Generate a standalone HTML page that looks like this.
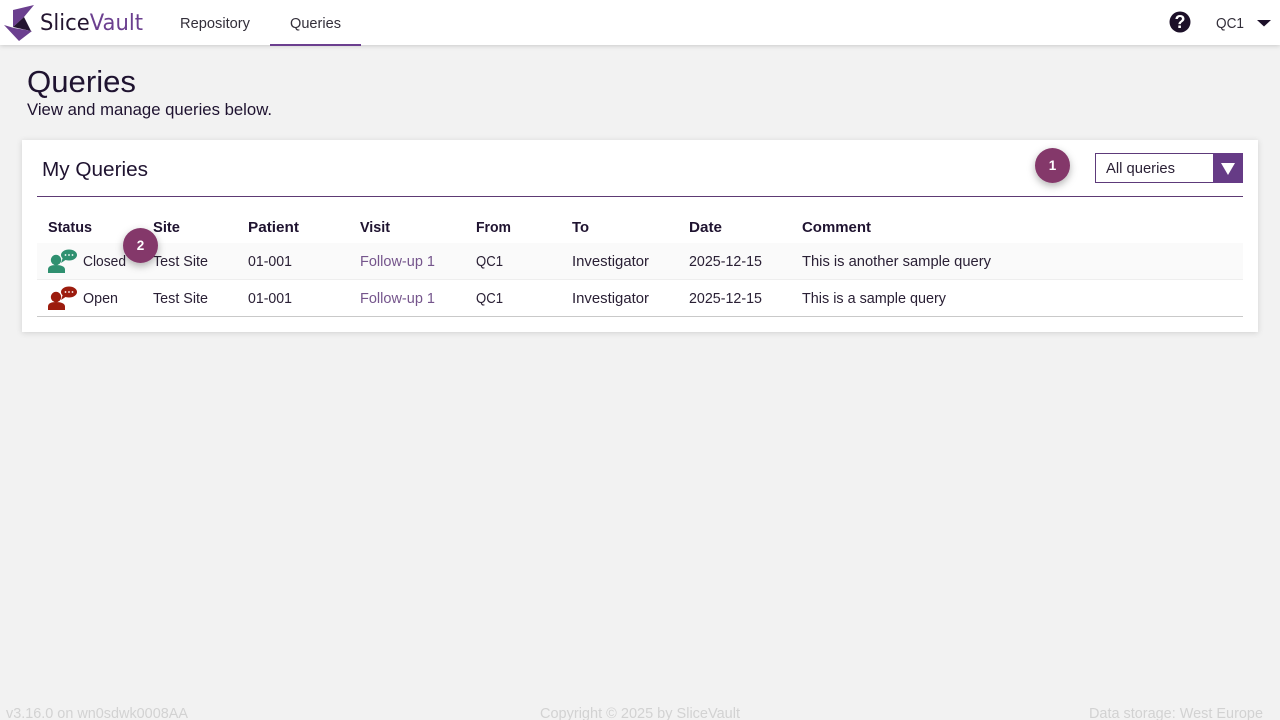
<!DOCTYPE html>
<html lang="en">
<head>
<meta charset="utf-8">
<title>SliceVault Queries</title>
<style>
html,body{margin:0;padding:0;width:1280px;height:720px;overflow:hidden;background:#f2f2f2}
svg{display:block}
text{font-family:"Liberation Sans",Arial,sans-serif;fill:#2a2035;font-size:14.5px}
.b{font-weight:bold;font-size:14.5px;fill:#1f1330}
.l{fill:#75558c}
.f{fill:#d2d2d2;font-size:14.5px}
.n{fill:#332f3a}
</style>
</head>
<body>
<svg width="1280" height="720" viewBox="0 0 1280 720" xmlns="http://www.w3.org/2000/svg">
<defs>
<filter id="hs" x="-5%" y="-50%" width="110%" height="220%"><feDropShadow dx="0" dy="1" stdDeviation="2.500" flood-color="#000" flood-opacity=".17"/></filter>
<filter id="cs" x="-5%" y="-10%" width="110%" height="120%"><feDropShadow dx="0" dy="1" stdDeviation="3" flood-color="#000" flood-opacity=".14"/></filter>
<filter id="bs" x="-60%" y="-60%" width="220%" height="220%"><feDropShadow dx="0" dy="3" stdDeviation="4" flood-color="#000" flood-opacity=".3"/></filter>
</defs>
<rect width="1280" height="720" fill="#f2f2f2"/>
<rect x="0" y="0" width="1280" height="45" fill="#fff" filter="url(#hs)"/>
<polygon points="34,5 13,10 13,27 24,17" fill="#6b3f8f"/>
<polygon points="24,17 13,27 31,31" fill="#241530"/>
<polygon points="4,25 19,41 32,31 14,28" fill="#6b3f8f"/>
<text x="40" y="30" textLength="103" lengthAdjust="spacingAndGlyphs" style="font-family:'DejaVu Sans',sans-serif;font-size:22px;fill:#241530">Slice<tspan style="fill:#6b3f8f">Vault</tspan></text>
<text x="180" y="28" textLength="70" lengthAdjust="spacingAndGlyphs" class="n">Repository</text>
<text x="290" y="28" textLength="51" lengthAdjust="spacingAndGlyphs" class="n">Queries</text>
<rect x="270" y="44" width="91" height="2" fill="#6b3f8f"/>
<circle cx="1180" cy="22" r="10.500" fill="#1c1029"/>
<text x="1180" y="28" text-anchor="middle" style="font-size:18px;font-weight:bold;fill:#fff">?</text>
<text x="1216" y="28" textLength="28" lengthAdjust="spacingAndGlyphs" class="n">QC1</text>
<polygon points="1257,20 1271,20 1264,26.500" fill="#1c1029"/>

<text x="27" y="92" textLength="109" lengthAdjust="spacingAndGlyphs" style="font-size:31px;fill:#1f1330">Queries</text>
<text x="27" y="115" textLength="245" lengthAdjust="spacingAndGlyphs" style="font-size:16.500px;fill:#1f1330">View and manage queries below.</text>

<rect x="22" y="140" width="1236" height="192" fill="#fff" filter="url(#cs)"/>
<text x="42" y="176" textLength="106" lengthAdjust="spacingAndGlyphs" style="font-size:20.500px;fill:#1f1330">My Queries</text>
<rect x="37" y="196" width="1206" height="1" fill="#5d3a74"/>

<rect x="1095.500" y="153.500" width="147" height="29" fill="#fff" stroke="#5d3a7a"/>
<rect x="1213" y="153" width="30" height="30" fill="#663b86"/>
<polygon points="1221,163 1235,163 1228,175" fill="#fff"/>
<text x="1106" y="173" textLength="69" lengthAdjust="spacingAndGlyphs">All queries</text>

<text class="b" x="48" y="232" textLength="44" lengthAdjust="spacingAndGlyphs">Status</text>
<text class="b" x="153" y="232" textLength="27" lengthAdjust="spacingAndGlyphs">Site</text>
<text class="b" x="248" y="232" textLength="51" lengthAdjust="spacingAndGlyphs">Patient</text>
<text class="b" x="360" y="232" textLength="30" lengthAdjust="spacingAndGlyphs">Visit</text>
<text class="b" x="476" y="232" textLength="35" lengthAdjust="spacingAndGlyphs">From</text>
<text class="b" x="572" y="232" textLength="17" lengthAdjust="spacingAndGlyphs">To</text>
<text class="b" x="689" y="232" textLength="33" lengthAdjust="spacingAndGlyphs">Date</text>
<text class="b" x="802" y="232" textLength="69" lengthAdjust="spacingAndGlyphs">Comment</text>

<rect x="37" y="243" width="1206" height="36" fill="#fafafa"/>
<rect x="37" y="279" width="1206" height="1" fill="#eeeeee"/>
<rect x="37" y="316" width="1206" height="1" fill="#c9c9c9"/>

<g fill="#2f9070">
<circle cx="56" cy="260" r="5.200"/>
<path d="M48 273v-3.500c0-3 3-4.500 8-4.500s9 1.500 9 4.500v3.500z"/>
<ellipse cx="69" cy="255" rx="8" ry="5.500"/>
<polygon points="63,257 61,263 67,259"/>
</g>
<g fill="#fff"><circle cx="65.500" cy="255" r=".9"/><circle cx="69" cy="255" r=".9"/><circle cx="72.500" cy="255" r=".9"/></g>
<g fill="#9c1c0e">
<circle cx="56" cy="297" r="5.200"/>
<path d="M48 310v-3.500c0-3 3-4.500 8-4.500s9 1.500 9 4.500v3.500z"/>
<ellipse cx="69" cy="292" rx="8" ry="5.500"/>
<polygon points="63,294 61,300 67,296"/>
</g>
<g fill="#fff"><circle cx="65.500" cy="292" r=".9"/><circle cx="69" cy="292" r=".9"/><circle cx="72.500" cy="292" r=".9"/></g>

<text x="83" y="266" textLength="43" lengthAdjust="spacingAndGlyphs">Closed</text>
<text x="153" y="266" textLength="55" lengthAdjust="spacingAndGlyphs">Test Site</text>
<text x="248" y="266" textLength="44" lengthAdjust="spacingAndGlyphs">01-001</text>
<text x="360" y="266" textLength="75" lengthAdjust="spacingAndGlyphs" class="l">Follow-up 1</text>
<text x="476" y="266" textLength="27" lengthAdjust="spacingAndGlyphs">QC1</text>
<text x="572" y="266" textLength="77" lengthAdjust="spacingAndGlyphs">Investigator</text>
<text x="689" y="266" textLength="73" lengthAdjust="spacingAndGlyphs">2025-12-15</text>
<text x="802" y="266" textLength="189" lengthAdjust="spacingAndGlyphs">This is another sample query</text>

<text x="83" y="303" textLength="35" lengthAdjust="spacingAndGlyphs">Open</text>
<text x="153" y="303" textLength="55" lengthAdjust="spacingAndGlyphs">Test Site</text>
<text x="248" y="303" textLength="44" lengthAdjust="spacingAndGlyphs">01-001</text>
<text x="360" y="303" textLength="75" lengthAdjust="spacingAndGlyphs" class="l">Follow-up 1</text>
<text x="476" y="303" textLength="27" lengthAdjust="spacingAndGlyphs">QC1</text>
<text x="572" y="303" textLength="77" lengthAdjust="spacingAndGlyphs">Investigator</text>
<text x="689" y="303" textLength="73" lengthAdjust="spacingAndGlyphs">2025-12-15</text>
<text x="802" y="303" textLength="144" lengthAdjust="spacingAndGlyphs">This is a sample query</text>

<circle cx="1052.500" cy="165.500" r="17.500" fill="#84386b" filter="url(#bs)"/>
<text x="1052.500" y="170" text-anchor="middle" style="font-size:13.500px;font-weight:bold;fill:#fff">1</text>
<circle cx="140.500" cy="245.500" r="17.500" fill="#84386b" filter="url(#bs)"/>
<text x="140.500" y="250" text-anchor="middle" style="font-size:13.500px;font-weight:bold;fill:#fff">2</text>

<text class="f" x="6" y="718" textLength="182" lengthAdjust="spacingAndGlyphs">v3.16.0 on wn0sdwk0008AA</text>
<text class="f" x="540" y="718" textLength="200" lengthAdjust="spacingAndGlyphs">Copyright © 2025 by SliceVault</text>
<text class="f" x="1089" y="718" textLength="174" lengthAdjust="spacingAndGlyphs">Data storage: West Europe</text>
</svg>
</body>
</html>
